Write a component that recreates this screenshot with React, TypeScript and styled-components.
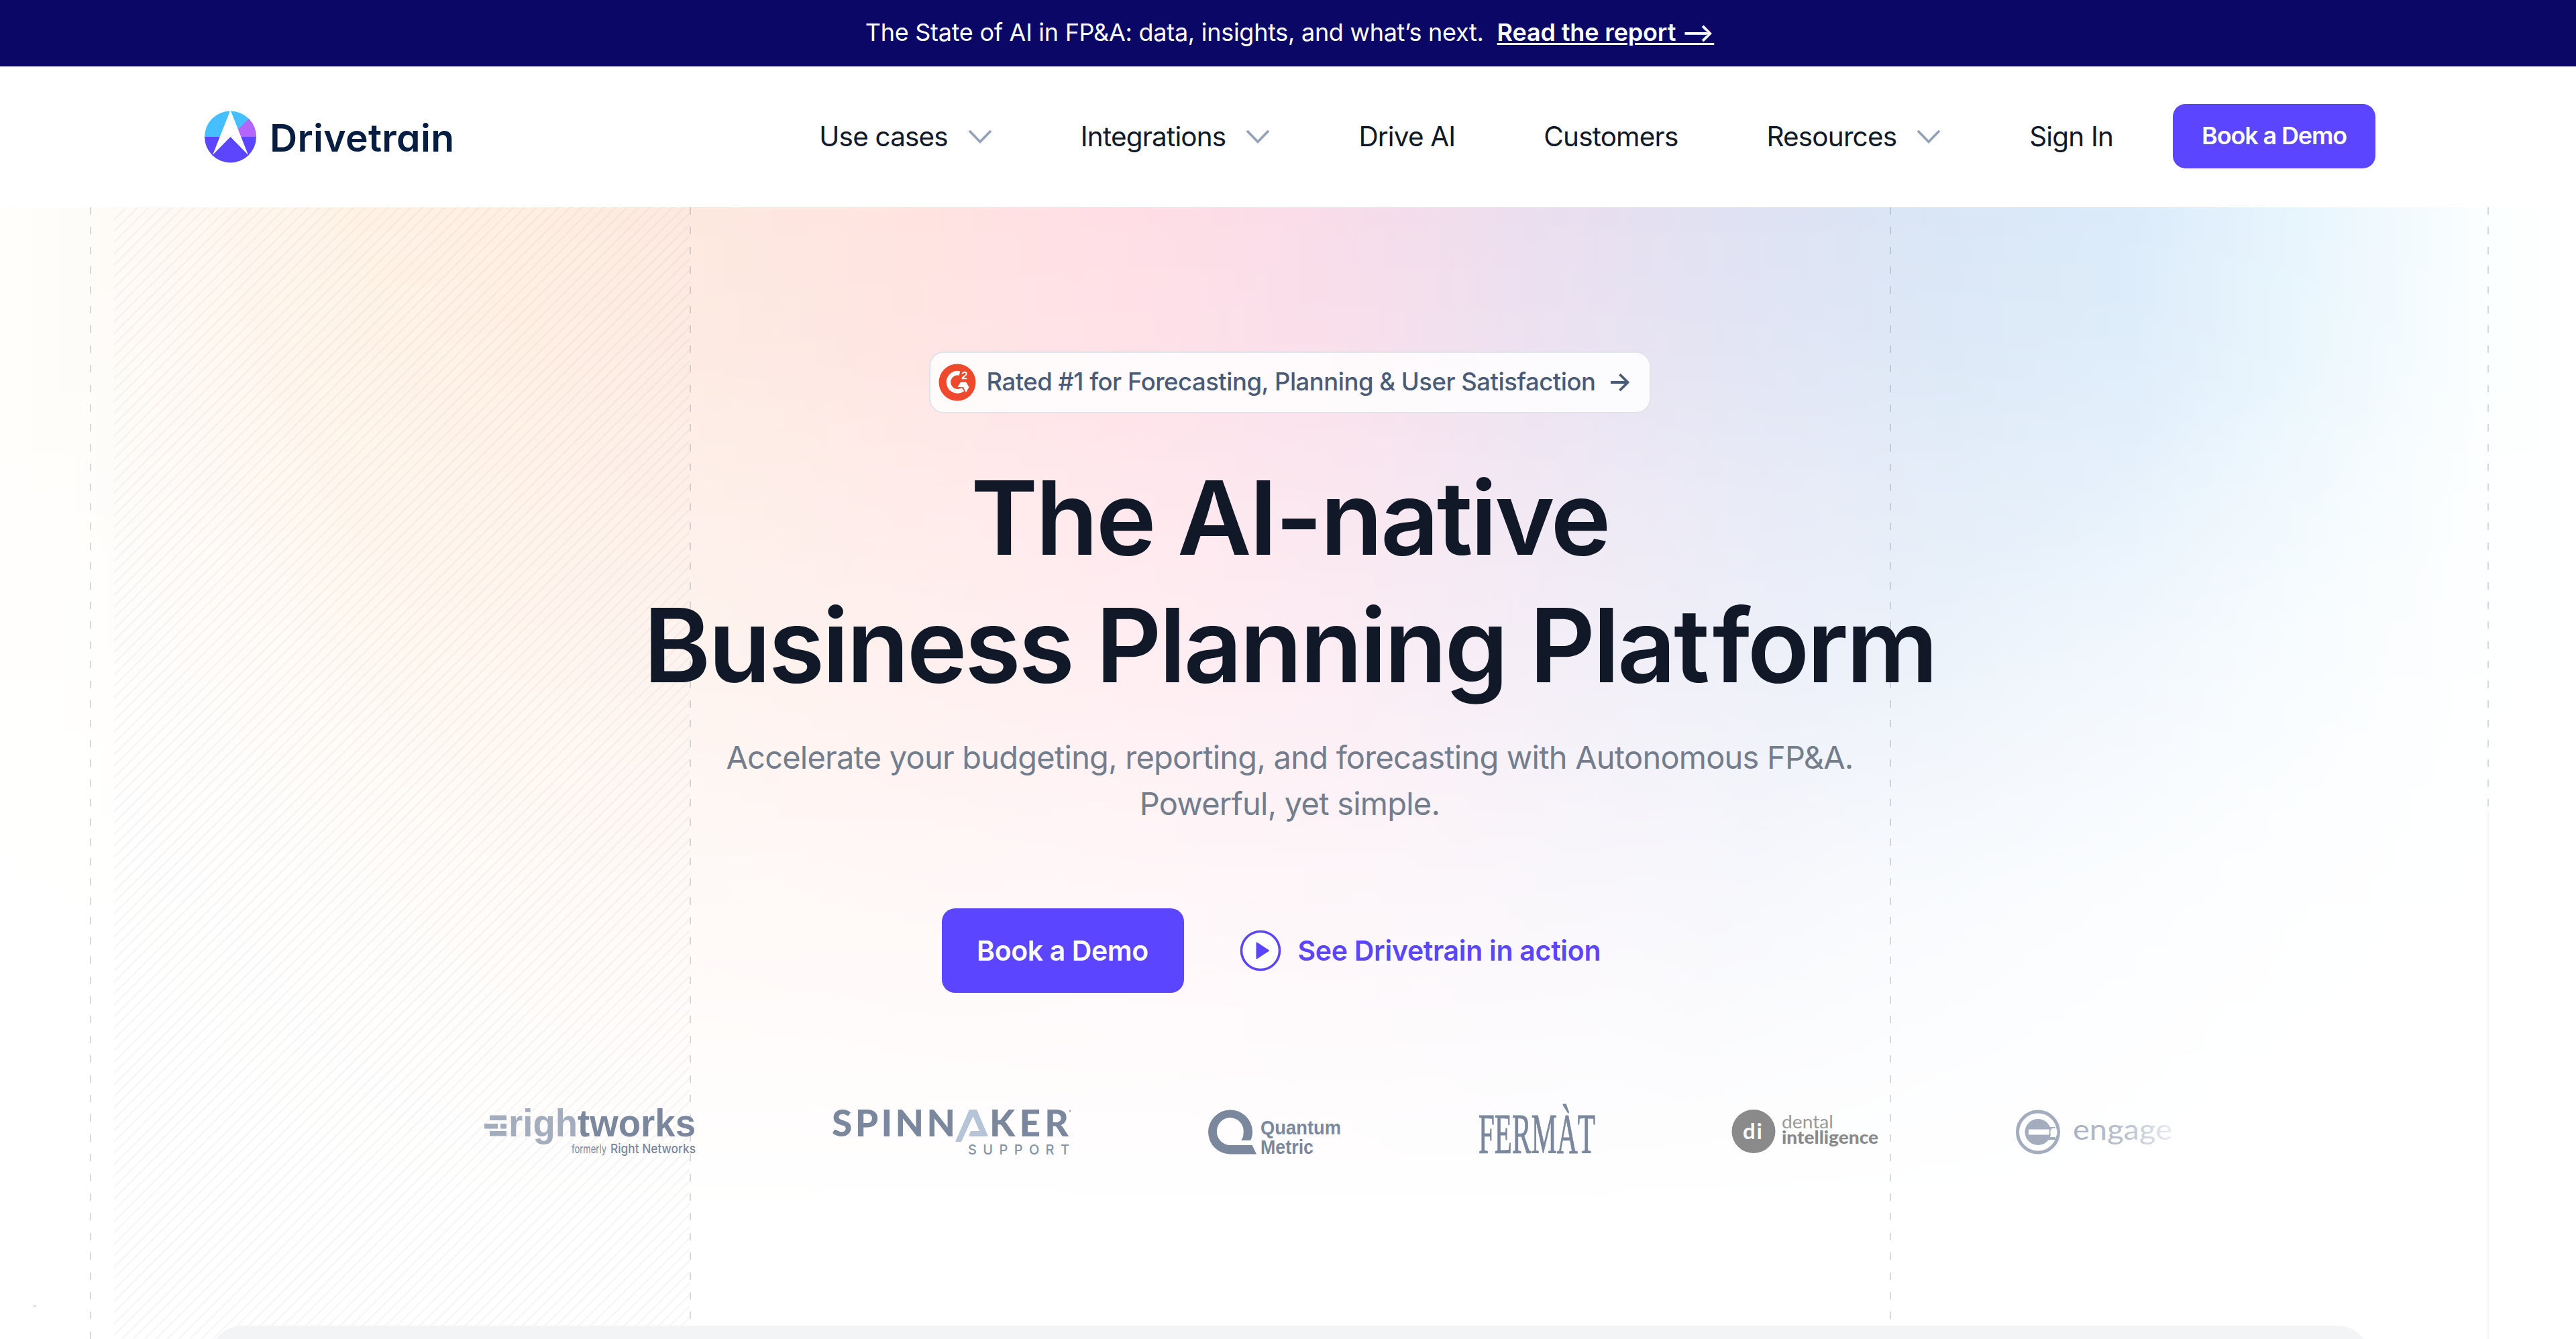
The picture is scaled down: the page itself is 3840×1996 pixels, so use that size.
import React from 'react';
import styled, { createGlobalStyle } from 'styled-components';

const colors = {
  navy: '#0b0766',
  primary: '#5b45ff',
  ink: '#111827',
  slate: '#4a5b78',
  muted: '#737d8c',
  logo: '#7a879c',
  logoLight: '#a3adbd',
  white: '#ffffff',
};

interface NavEntry {
  label: string;
  menu?: boolean;
}

const navEntries: NavEntry[] = [
  { label: 'Use cases', menu: true },
  { label: 'Integrations', menu: true },
  { label: 'Drive AI' },
  { label: 'Customers' },
  { label: 'Resources', menu: true },
  { label: 'Sign In' },
];

const BrandLogo: React.FC = () => (
  <svg width="380" height="90" viewBox="0 0 380 90">
    <clipPath id="brand">
      <circle cx="39.5" cy="45" r="38.5" />
    </clipPath>
    <g clipPath="url(#brand)">
      <rect width="80" height="45" fill="#45bfff" />
      <path d="M39.500 45 L80 5 V45 Z" fill="#b366f9" />
      <rect y="45" width="80" height="45" fill={colors.primary} />
      <path d="M39.500 5 L66 72 L39.500 45 L13 72 Z" fill={colors.white} />
    </g>
    <BrandText x="98" y="66.500" textLength="275">
      Drivetrain
    </BrandText>
  </svg>
);

const Chevron: React.FC = () => (
  <svg width="36" height="22" viewBox="0 0 36 22" fill="none">
    <path d="M2 2 L18 18.500 L34 2" stroke="#94a0b4" strokeWidth="3.600" />
  </svg>
);

const G2Badge: React.FC = () => (
  <svg width="56" height="56" viewBox="0 0 56 56">
    <circle cx="28" cy="28" r="27.500" fill="#ef492d" />
    <path
      d="M31.500 14.500 A13.500 13.500 0 1 0 36.500 38.500"
      fill="none"
      stroke={colors.white}
      strokeWidth="6.500"
    />
    <path d="M33 27.500 H41 L45.500 35 L41 43 L37 35 H28.500 Z" fill={colors.white} />
    <path
      d="M35.500 15.500 q1-2.700 3.400-2.700 q2.800 0 2.800 2.500 q0 1.700-2.800 3.200 q-2.900 1.600-3.100 3.700 h6.500"
      fill="none"
      stroke={colors.white}
      strokeWidth="2"
    />
  </svg>
);

const ArrowRight: React.FC = () => (
  <svg width="28" height="30" viewBox="0 0 28 30" fill="none">
    <path d="M0 15 H25 M13.500 3 L25.500 15 L13.500 27" stroke={colors.slate} strokeWidth="3.800" />
  </svg>
);

const PlayIcon: React.FC = () => (
  <svg width="60" height="62" viewBox="0 0 60 62">
    <circle cx="30" cy="31" r="28.500" fill={colors.white} stroke={colors.primary} strokeWidth="3.600" />
    <path
      d="M24.500 19.500 L42 31 L24.500 42.500 Z"
      fill={colors.primary}
      stroke={colors.primary}
      strokeWidth="2"
      strokeLinejoin="round"
    />
  </svg>
);

const Rightworks: React.FC = () => (
  <svg width="316" height="90" viewBox="0 0 316 90">
    <g fill={colors.logoLight}>
      <rect x="8" y="22.500" width="25" height="7.500" />
      <rect x="0" y="35" width="20" height="7.500" />
      <rect x="24" y="35" width="9" height="7.500" />
      <rect x="8" y="46" width="25" height="7.500" />
    </g>
    <LogoText x="36" y="53.500" textLength="279" lengthAdjust="spacingAndGlyphs" $size={57} $weight={700} $family="Liberation Sans">
      <tspan fill={colors.logoLight}>righ</tspan>tworks
    </LogoText>
    <LogoText x="130" y="79" textLength="52" lengthAdjust="spacingAndGlyphs" $size={17} $weight={400}>
      formerly
    </LogoText>
    <LogoText x="188" y="79" textLength="127" lengthAdjust="spacingAndGlyphs" $size={19} $weight={500}>
      Right Networks
    </LogoText>
  </svg>
);

const Spinnaker: React.FC = () => (
  <svg width="356" height="90" viewBox="0 0 356 90">
    <LogoText x="-1" y="54" textLength="184" $size={55} $weight={900} $family="Lato">
      SPINN
    </LogoText>
    <path d="M204 14 H215 L232 54 H203 L206 46 H219 L209.500 24 L192 62 H183 Z" fill="#b6c4d8" />
    <LogoText x="234" y="54" textLength="118" $size={55} $weight={900} $family="Lato">
      KER
    </LogoText>
    <LogoText x="202" y="80.500" textLength="151" $size={20} $weight={500} fill="#8494a4">
      SUPPORT
    </LogoText>
    <circle cx="354" cy="16" r="1.500" fill={colors.logoLight} />
  </svg>
);

const QuantumMetric: React.FC = () => (
  <svg width="198" height="90" viewBox="0 0 198 90">
    <path
      d="M49 60 H63 C66 55 66 50 66 46 A33 33 0 1 0 33 80.500 H72 L65.500 67 H33 A20 20.500 0 1 1 52.500 50 C52.500 54 51 57 49 60 Z"
      fill={colors.logo}
    />
    <LogoText x="78" y="51" textLength="120" lengthAdjust="spacingAndGlyphs" $size={29.5} $weight={700} $family="Liberation Sans">
      Quantum
    </LogoText>
    <LogoText x="78" y="80" textLength="79" lengthAdjust="spacingAndGlyphs" $size={29.5} $weight={700} $family="Liberation Sans">
      Metric
    </LogoText>
  </svg>
);

const Fermat: React.FC = () => (
  <svg width="175" height="90" viewBox="0 0 175 90">
    <LogoText
      x="2"
      y="78.500"
      textLength="174"
      lengthAdjust="spacingAndGlyphs"
      stroke={colors.logo}
      strokeWidth="1"
      $size={84}
      $weight={400}
      $family="Liberation Serif"
    >
      FERMÀT
    </LogoText>
  </svg>
);

const DentalIntelligence: React.FC = () => (
  <svg width="220" height="90" viewBox="0 0 220 90">
    <circle cx="33" cy="46.500" r="32.500" fill="#8a8a8a" />
    <LogoText x="17" y="58" textLength="29" $size={33} $weight={700} $family="Lato" fill={colors.white}>
      di
    </LogoText>
    <LogoText x="75" y="41.500" textLength="77" lengthAdjust="spacingAndGlyphs" $size={27} $weight={400} $family="Lato" fill="#9a9a9a">
      dental
    </LogoText>
    <LogoText x="75" y="65" textLength="144" lengthAdjust="spacingAndGlyphs" $size={26} $weight={900} $family="Lato" fill="#8a8a8a">
      intelligence
    </LogoText>
  </svg>
);

const Engage: React.FC = () => (
  <svg width="236" height="90" viewBox="0 0 236 90">
    <defs>
      <linearGradient id="engageFade" gradientUnits="userSpaceOnUse" x1="88" x2="240" y1="0" y2="0">
        <stop offset="0" stopColor="#a9b2c1" />
        <stop offset="0.500" stopColor="#b9c1cd" />
        <stop offset="1" stopColor="#eef0f3" />
      </linearGradient>
    </defs>
    <circle cx="34" cy="47.500" r="30.500" fill="none" stroke={colors.logoLight} strokeWidth="5" />
    <circle cx="34" cy="47.500" r="19.500" fill={colors.logoLight} />
    <path d="M49 42 H60 M49 57 H60" stroke={colors.logoLight} strokeWidth="4" />
    <rect x="20" y="43.500" width="31" height="8" fill={colors.white} />
    <rect x="52.500" y="41.500" width="10" height="13" rx="5" fill={colors.white} />
    <LogoText
      x="86"
      y="59"
      textLength="148"
      lengthAdjust="spacingAndGlyphs"
      $size={43}
      $weight={400}
      $family="Lato"
      fill="url(#engageFade)"
    >
      engage
    </LogoText>
  </svg>
);

const App: React.FC = () => {
  const renderNav = (): React.ReactElement[] => {
    return navEntries.map(({ label, menu }) => (
      <NavItem key={label}>
        {label}
        {menu && <Chevron />}
      </NavItem>
    ));
  };

  return (
    <Page>
      <GlobalStyle />
      <Banner>
        <span>The State of AI in FP&amp;A: data, insights, and what’s next.</span>
        <BannerLink>Read the report ⟶</BannerLink>
      </Banner>
      <Header>
        <BrandLogo />
        <Nav>
          {renderNav()}
          <NavButton>Book a Demo</NavButton>
        </Nav>
      </Header>
      <Hero>
        <Glow />
        <Guides>
          <GuideColumn $hatched />
          <GuideColumn $wide />
          <GuideColumn />
        </Guides>
        <HeroContent>
          <Rating>
            <G2Badge />
            <RatingText>Rated #1 for Forecasting, Planning &amp; User Satisfaction</RatingText>
            <ArrowRight />
          </Rating>
          <Title>
            The AI-native
            <br />
            Business Planning Pla<Loose>t</Loose>form
          </Title>
          <Subtitle>
            Accelerate your budgeting, reporting, and forecasting with Autonomous FP&amp;A.
            <br />
            Powerful, yet simple.
          </Subtitle>
          <Actions>
            <DemoButton>Book a Demo</DemoButton>
            <WatchLink>
              <PlayIcon />
              See Drivetrain in action
            </WatchLink>
          </Actions>
          <Customers>
            <Rightworks />
            <Spinnaker />
            <QuantumMetric />
            <Fermat />
            <DentalIntelligence />
            <Engage />
          </Customers>
          <PreviewCard />
        </HeroContent>
        <CornerDot />
      </Hero>
    </Page>
  );
};

const GlobalStyle = createGlobalStyle`
  * {
    box-sizing: border-box;
  }

  body {
    margin: 0;
    background: ${colors.white};
    font-family: Inter, 'Liberation Sans', sans-serif;
    color: ${colors.ink};
  }

  svg {
    display: block;
    flex: none;
    overflow: visible;
  }
`;

const Page = styled.div`
  display: flex;
  flex-direction: column;
  height: 1996px;
  overflow: hidden;
`;

const Banner = styled.div`
  display: flex;
  flex: none;
  justify-content: center;
  gap: 20px;
  height: 99px;
  padding: 0 0 3px 5px;
  background: ${colors.navy};
  color: ${colors.white};
  font-size: 36px;
  line-height: 96px;
  letter-spacing: -0.28px;
  white-space: nowrap;
`;

const BannerLink = styled.a`
  font-weight: 600;
  letter-spacing: -0.15px;
  text-decoration: underline;
  text-decoration-thickness: 3px;
  text-underline-offset: 3px;
`;

const Header = styled.header`
  display: flex;
  flex: none;
  align-items: center;
  justify-content: space-between;
  height: 210px;
  padding: 0 299px 0 304px;
  background: ${colors.white};
`;

const BrandText = styled.text`
  font-family: Inter, sans-serif;
  font-size: 57px;
  font-weight: 600;
  font-feature-settings: 'cv11';
  fill: #071d41;
`;

const Nav = styled.nav`
  display: flex;
  align-items: center;
  gap: 132px;
`;

const NavItem = styled.div`
  display: flex;
  align-items: center;
  gap: 30px;
  font-size: 40.5px;
  line-height: 60px;
  letter-spacing: -0.85px;
  white-space: nowrap;
`;

const Button = styled.button`
  display: flex;
  align-items: center;
  justify-content: center;
  border: 0;
  background: ${colors.primary};
  color: ${colors.white};
  font-family: inherit;
  font-weight: 600;
  white-space: nowrap;
`;

const NavButton = styled(Button)`
  width: 302px;
  height: 96px;
  margin: 0 0 2px -43px;
  padding-bottom: 4px;
  border-radius: 19px;
  font-size: 36px;
  letter-spacing: -1.15px;
`;

const Hero = styled.section`
  position: relative;
  flex: none;
  height: 1687px;
  overflow: hidden;
`;

const Glow = styled.div`
  position: absolute;
  inset: 0;
  background:
    radial-gradient(ellipse 900px 1400px at 0 100%, #fff 35%, rgba(255, 255, 255, 0) 100%),
    radial-gradient(ellipse 1400px 1500px at 100% 100%, #fff 35%, rgba(255, 255, 255, 0) 100%),
    linear-gradient(
      90deg,
      #fffefa 0,
      #fefcf8 135px,
      #fff8f2 280px,
      #fff3e6 520px,
      #ffeee1 780px,
      #fde8df 1060px,
      #ffe3e0 1350px,
      #ffdee6 1700px,
      #f8dce9 2000px,
      #ebdeef 2280px,
      #dfe2f3 2600px,
      #d9e6f6 2900px,
      #dbebfa 3180px,
      #e7f5fd 3420px,
      #f2fafe 3580px,
      #fcffff 3720px,
      #fff 3840px
    );
  mask-image: linear-gradient(
    180deg,
    #000 0,
    rgba(0, 0, 0, 0.9) 200px,
    rgba(0, 0, 0, 0.7) 420px,
    rgba(0, 0, 0, 0.5) 700px,
    rgba(0, 0, 0, 0.27) 1000px,
    rgba(0, 0, 0, 0.1) 1300px,
    transparent 1500px
  );
`;

const dashes = 'repeating-linear-gradient(180deg, rgba(90, 100, 115, 0.24) 0 11px, transparent 11px 29.4px)';

const Guides = styled.div`
  position: absolute;
  inset: 0 130px 0 134px;
  display: flex;
  background:
    ${dashes} right top / 2px 900px no-repeat,
    linear-gradient(#f5f5f6, #f5f5f6) right bottom / 2px 787px no-repeat;
`;

const GuideColumn = styled.div<{ $hatched?: boolean; $wide?: boolean }>`
  flex: ${({ $wide }) => ($wide ? '0 0 1789px' : '0 0 894px')};
  padding-left: 36px;
  background: ${dashes} left / 2px 100% no-repeat;

  &::before {
    content: '';
    display: ${({ $hatched }) => ($hatched ? 'block' : 'none')};
    height: 100%;
    background: repeating-linear-gradient(135deg, rgba(80, 80, 80, 0.045) 0 2px, transparent 3px 11px, rgba(80, 80, 80, 0.045) 12px);
  }
`;

const HeroContent = styled.div`
  position: relative;
  display: flex;
  flex-direction: column;
  align-items: center;
  padding: 215px 0 0 5px;
`;

const Rating = styled.div`
  display: flex;
  align-items: center;
  width: 1076px;
  height: 92px;
  padding: 0 30px 0 12px;
  border: 2px solid #dfe3ea;
  border-radius: 22px;
  background: rgba(255, 255, 255, 0.84);
  color: ${colors.slate};
`;

const RatingText = styled.span`
  flex: 1;
  padding: 0 0 2px 16px;
  font-size: 36.5px;
  font-weight: 500;
  letter-spacing: -0.5px;
  white-space: nowrap;
`;

const Title = styled.h1`
  margin: 61px 0 0;
  font-size: 152px;
  font-weight: 600;
  font-variant-ligatures: none;
  line-height: 190px;
  letter-spacing: -3.4px;
  text-align: center;
  white-space: nowrap;
`;

/* keeps the crossbars of "t" and "f" apart */
const Loose = styled.span`
  letter-spacing: 4px;
`;

const Subtitle = styled.p`
  margin: 37px 0 0;
  color: ${colors.muted};
  font-size: 47px;
  font-weight: 400;
  line-height: 69px;
  letter-spacing: -0.78px;
  text-align: center;
  white-space: nowrap;
`;

const Actions = styled.div`
  display: flex;
  align-items: center;
  gap: 84px;
  width: 1038px;
  height: 126px;
  margin-top: 122px;
`;

const DemoButton = styled(Button)`
  width: 361px;
  height: 126px;
  border-radius: 20px;
  font-size: 41px;
  letter-spacing: -0.4px;
`;

const WatchLink = styled.a`
  display: flex;
  align-items: center;
  gap: 26px;
  color: ${colors.primary};
  font-size: 41px;
  font-weight: 600;
  letter-spacing: -0.3px;
  white-space: nowrap;
`;

const Customers = styled.div`
  display: flex;
  justify-content: space-between;
  width: 2518px;
  height: 90px;
  margin: 160px 0 0 117px;
`;

const LogoText = styled.text<{ $size: number; $weight: number; $family?: string; fill?: string }>`
  font-family: ${({ $family }) => ($family ? `'${$family}'` : 'Inter')}, sans-serif;
  font-size: ${({ $size }) => $size}px;
  font-weight: ${({ $weight }) => $weight};
  fill: ${({ fill }) => fill || colors.logo};
`;

const PreviewCard = styled.div`
  width: 3222px;
  height: 120px;
  margin-top: 246px;
  border-radius: 50px 50px 0 0;
  background: #f3f4f6;
`;

const CornerDot = styled.i`
  position: absolute;
  bottom: 48px;
  left: 50px;
  width: 3px;
  height: 3px;
  background: #d3d6fb;
`;

export default App;
